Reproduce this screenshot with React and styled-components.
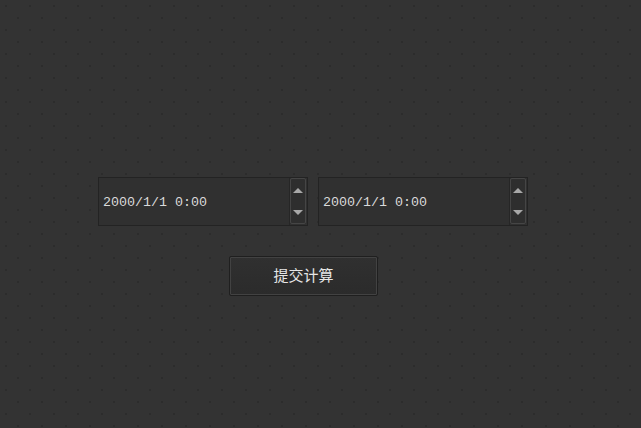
import React from "react";
import styled, { createGlobalStyle } from "styled-components";

const Global = createGlobalStyle`
  html, body { margin: 0; padding: 0; }
  body {
    background-color: #333333;
    background-image:
      radial-gradient(circle at 1px 1px, #2c2c2c 0.8px, transparent 1px),
      radial-gradient(circle at 1px 1px, #2c2c2c 0.8px, transparent 1px);
    background-size: 24px 24px, 24px 24px;
    background-position: 5px 5px, 17px 17px;
    width: 641px;
    height: 428px;
    overflow: hidden;
  }
`;

const Page = styled.div`
  width: 641px;
  height: 428px;
  box-sizing: border-box;
  padding: 177px 0 0 98px;
  display: flex;
  flex-direction: column;
  align-items: flex-start;
  gap: 30px;
`;

const Row = styled.div`
  display: flex;
  gap: 10px;
`;

const Field = styled.div`
  width: 210px;
  height: 49px;
  box-sizing: border-box;
  border: 1px solid #232323;
  background: #303030;
  display: flex;
  align-items: stretch;
`;

const Value = styled.div`
  flex: 1;
  display: flex;
  align-items: center;
  padding-left: 4px;
  padding-top: 1px;
  font-family: "Liberation Mono", "DejaVu Sans Mono", monospace;
  font-size: 13.33px;
  color: #dadada;
  border-right: 1px solid #262626;
`;

const Spin = styled.div`
  width: 16px;
  margin: 0 1px 1px 0;
  box-sizing: border-box;
  border: 1px solid #454545;
  border-radius: 2px;
  background: #2e2e2e;
  display: flex;
  flex-direction: column;
  align-items: center;
  justify-content: space-around;
`;

const Arrow = styled.div`
  width: 0;
  height: 0;
  border-left: 5px solid transparent;
  border-right: 5px solid transparent;
  ${(p) =>
    p.$down
      ? "border-top: 5px solid #a8a8a8;"
      : "border-bottom: 5px solid #a8a8a8;"}
`;

const ButtonWrap = styled.div`
  padding-left: 131px;
`;

const Button = styled.button`
  width: 149px;
  height: 40px;
  box-sizing: border-box;
  border: 1px solid #1f1f1f;
  border-radius: 2px;
  background: linear-gradient(#303030, #2b2b2b);
  box-shadow: inset 0 0 0 1px #424242;
  color: #e6e6e6;
  font-family: "Noto Sans CJK SC", sans-serif;
  font-size: 15px;
  line-height: 20px;
  padding: 0 0 3px 0;
  cursor: pointer;
`;

function DateField() {
  return (
    <Field>
      <Value>2000/1/1 0:00</Value>
      <Spin>
        <Arrow />
        <Arrow $down />
      </Spin>
    </Field>
  );
}

export default function App() {
  return (
    <>
      <Global />
      <Page>
        <Row>
          <DateField />
          <DateField />
        </Row>
        <ButtonWrap>
          <Button>提交计算</Button>
        </ButtonWrap>
      </Page>
    </>
  );
}
